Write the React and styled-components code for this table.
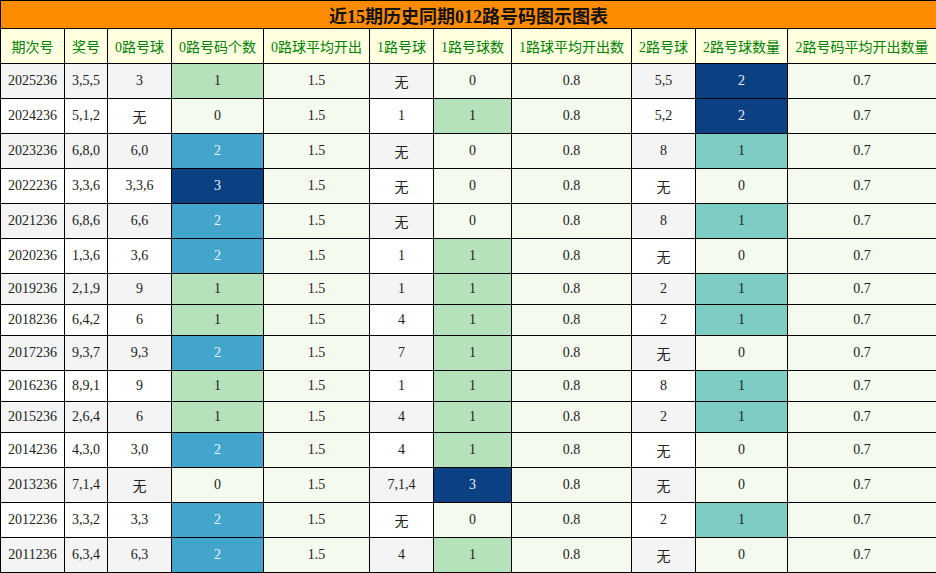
import React from 'react';
import styled, { createGlobalStyle } from 'styled-components';

const GlobalStyle = createGlobalStyle`
  body {
    margin: 0;
    background: #fff;
    font-family: "Liberation Serif", "Noto Sans CJK SC", serif;
  }
`;

const Table = styled.table`
  width: 936px;
  border-collapse: collapse;
  table-layout: fixed;
  font-size: 14px;
  color: #222;
`;

const TitleCell = styled.th`
  background: #ff8c00;
  border: 1px solid #000;
  padding: 1px 0 0;
  font-size: 18px;
  font-weight: bold;
  color: #111;
  text-align: center;
`;

const HeadCell = styled.th`
  background: #ffffe0;
  color: #008000;
  font-weight: normal;
  border: 1px solid #000;
  padding: 7px 0;
  text-align: center;
  white-space: nowrap;
`;

const Cell = styled.td`
  border: 1px solid #000;
  padding: 7px 0;
  text-align: center;
  white-space: nowrap;
  background: ${p => p.$bg || (p.$striped ? '#f4f4f4' : '#fff')};
  color: ${p => (p.$light ? '#eef4f8' : '#222')};
`;

const widths = [64, 43, 64, 92, 106, 64, 78, 120, 64, 92, 149];

const headers = [
  '期次号', '奖号', '0路号球', '0路号码个数', '0路球平均开出',
  '1路号球', '1路号球数', '1路球平均开出数', '2路号球', '2路号球数量', '2路号码平均开出数量',
];

// [期次号, 奖号, 0路号球, 0路个数, 1路号球, 1路个数, 2路号球, 2路个数]
const rows = [
  ['2025236', '3,5,5', '3', 1, '无', 0, '5,5', 2],
  ['2024236', '5,1,2', '无', 0, '1', 1, '5,2', 2],
  ['2023236', '6,8,0', '6,0', 2, '无', 0, '8', 1],
  ['2022236', '3,3,6', '3,3,6', 3, '无', 0, '无', 0],
  ['2021236', '6,8,6', '6,6', 2, '无', 0, '8', 1],
  ['2020236', '1,3,6', '3,6', 2, '1', 1, '无', 0],
  ['2019236', '2,1,9', '9', 1, '1', 1, '2', 1],
  ['2018236', '6,4,2', '6', 1, '4', 1, '2', 1],
  ['2017236', '9,3,7', '9,3', 2, '7', 1, '无', 0],
  ['2016236', '8,9,1', '9', 1, '1', 1, '8', 1],
  ['2015236', '2,6,4', '6', 1, '4', 1, '2', 1],
  ['2014236', '4,3,0', '3,0', 2, '4', 1, '无', 0],
  ['2013236', '7,1,4', '无', 0, '7,1,4', 3, '无', 0],
  ['2012236', '3,3,2', '3,3', 2, '无', 0, '2', 1],
  ['2011236', '6,3,4', '6,3', 2, '4', 1, '无', 0],
];

const AVG_BG = '#f4fbee';

// colour per count, dark ones get light text
const scale3 = [
  { bg: AVG_BG },
  { bg: '#b5e2bb' },
  { bg: '#43a5cc', light: true },
  { bg: '#0b4182', light: true },
];
const scale2 = [
  { bg: AVG_BG },
  { bg: '#7ecdc4' },
  { bg: '#0b4182', light: true },
];

const CountCell = ({ value, scale }) => (
  <Cell $bg={scale[value].bg} $light={scale[value].light}>
    {value}
  </Cell>
);

export default function App() {
  return (
    <>
      <GlobalStyle />
      <Table>
        <colgroup>
          {widths.map((w, i) => (
            <col key={i} style={{ width: w }} />
          ))}
        </colgroup>
        <thead>
          <tr>
            <TitleCell colSpan={11}>近15期历史同期012路号码图示图表</TitleCell>
          </tr>
          <tr>
            {headers.map(h => (
              <HeadCell key={h}>{h}</HeadCell>
            ))}
          </tr>
        </thead>
        <tbody>
          {rows.map((r, i) => {
            const striped = i % 2 === 0;
            return (
              <tr key={r[0]}>
                <Cell $striped={striped}>{r[0]}</Cell>
                <Cell $striped={striped}>{r[1]}</Cell>
                <Cell $striped={striped}>{r[2]}</Cell>
                <CountCell value={r[3]} scale={scale3} />
                <Cell $bg={AVG_BG}>1.5</Cell>
                <Cell $striped={striped}>{r[4]}</Cell>
                <CountCell value={r[5]} scale={scale3} />
                <Cell $bg={AVG_BG}>0.8</Cell>
                <Cell $striped={striped}>{r[6]}</Cell>
                <CountCell value={r[7]} scale={scale2} />
                <Cell $bg={AVG_BG}>0.7</Cell>
              </tr>
            );
          })}
        </tbody>
      </Table>
    </>
  );
}
